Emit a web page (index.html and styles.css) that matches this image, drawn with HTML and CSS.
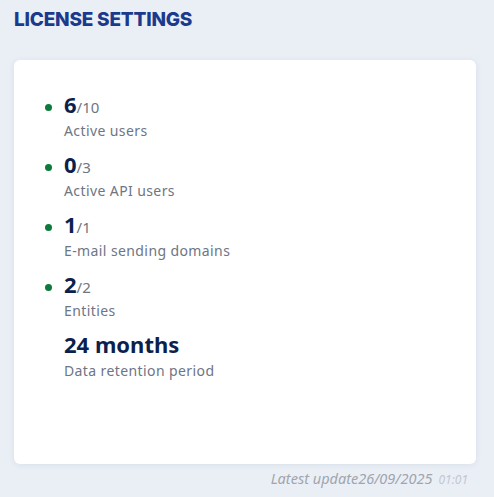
FILE: index.html
```html
<!DOCTYPE html>
<html lang="en">
<head>
<meta charset="utf-8">
<title>License settings</title>
<link rel="stylesheet" href="styles.css">
</head>
<body>
<div class="page">
  <h1 class="title">LICENSE SETTINGS</h1>
  <div class="card">
    <div class="item">
      <span class="dot"></span>
      <div class="info">
        <div class="value"><span class="num">6</span><span class="max">/10</span></div>
        <div class="label">Active users</div>
      </div>
    </div>
    <div class="item">
      <span class="dot"></span>
      <div class="info">
        <div class="value"><span class="num">0</span><span class="max">/3</span></div>
        <div class="label">Active API users</div>
      </div>
    </div>
    <div class="item">
      <span class="dot"></span>
      <div class="info">
        <div class="value"><span class="num">1</span><span class="max">/1</span></div>
        <div class="label">E-mail sending domains</div>
      </div>
    </div>
    <div class="item">
      <span class="dot"></span>
      <div class="info">
        <div class="value"><span class="num">2</span><span class="max">/2</span></div>
        <div class="label">Entities</div>
      </div>
    </div>
    <div class="item">
      <span class="dot dot-none"></span>
      <div class="info">
        <div class="value"><span class="num">24 months</span></div>
        <div class="label">Data retention period</div>
      </div>
    </div>
  </div>
  <div class="footer"><span class="update">Latest update26/09/2025</span><span class="time">01:01</span></div>
</div>
</body>
</html>
```

FILE: styles.css
```css
html, body {
  margin: 0;
  padding: 0;
  background: #eaeff6;
}
body {
  font-family: "Noto Sans", Lato, sans-serif;
}
.page {
  width: 494px;
  height: 497px;
  box-sizing: border-box;
  padding: 8px 18px 0 14px;
}
.title {
  margin: 0;
  font-family: Inter, "Noto Sans", sans-serif;
  font-weight: 800;
  font-size: 19px;
  line-height: 24px;
  color: #1c3a8c;
  letter-spacing: -0.2px;
}
.card {
  margin-top: 28px;
  height: 404px;
  box-sizing: border-box;
  background: #ffffff;
  border-radius: 6px;
  box-shadow: 0 1px 6px rgba(30, 50, 90, 0.08);
  padding: 31px 0 0 31px;
  display: flex;
  flex-direction: column;
  gap: 10px;
}
.item {
  display: flex;
  align-items: flex-start;
}
.dot {
  width: 7px;
  height: 7px;
  border-radius: 50%;
  background: #0b7a3b;
  margin: 13px 12px 0 0;
  flex: none;
}
.dot-none {
  background: transparent;
}
.value {
  height: 30px;
  line-height: 26px;
  color: #0d1f4c;
}
.num {
  font-size: 22px;
  font-weight: 700;
}
.max {
  font-size: 15px;
  color: #6e7584;
}
.label {
  height: 20px;
  font-size: 14px;
  line-height: 20px;
  letter-spacing: 0.4px;
  color: #6e7584;
}
.footer {
  margin-top: 5px;
  padding-right: 8px;
  text-align: right;
  font-size: 14.5px;
  line-height: 18px;
  color: #a0a5ae;
  font-style: italic;
}
.time {
  margin-left: 6px;
  font-size: 12px;
  color: #c3c7ce;
}
```
